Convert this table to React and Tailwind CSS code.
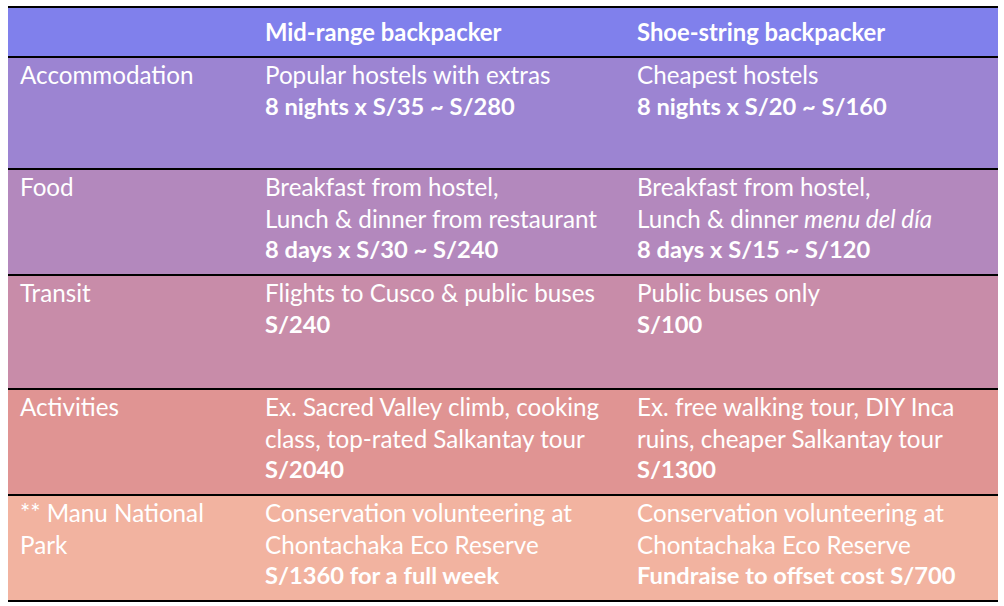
export default function App() {
  const rows = [
    {
      bg: "bg-[#9c84d2]",
      h: "h-[110px]",
      label: ["Accommodation"],
      a: [["Popular hostels with extras"], ["8 nights x S/35 ~ S/280", true]],
      b: [["Cheapest hostels"], ["8 nights x S/20 ~ S/160", true]],
    },
    {
      bg: "bg-[#b388bd]",
      h: "h-[104px]",
      label: ["Food"],
      a: [["Breakfast from hostel,"], ["Lunch & dinner from restaurant"], ["8 days x S/30 ~ S/240", true]],
      b: [["Breakfast from hostel,"], ["ITALIC"], ["8 days x S/15 ~ S/120", true]],
    },
    {
      bg: "bg-[#c88ca9]",
      h: "h-[112px]",
      label: ["Transit"],
      a: [["Flights to Cusco & public buses"], ["S/240", true]],
      b: [["Public buses only"], ["S/100", true]],
    },
    {
      bg: "bg-[#e09493]",
      h: "h-[104px]",
      label: ["Activities"],
      a: [["Ex. Sacred Valley climb, cooking"], ["class, top-rated Salkantay tour"], ["S/2040", true]],
      b: [["Ex. free walking tour, DIY Inca"], ["ruins, cheaper Salkantay tour"], ["S/1300", true]],
    },
    {
      bg: "bg-[#f2b3a0]",
      h: "h-[104px]",
      label: ["** Manu National", "Park"],
      a: [["Conservation volunteering at"], ["Chontachaka Eco Reserve"], ["S/1360 for a full week", true]],
      b: [["Conservation volunteering at"], ["Chontachaka Eco Reserve"], ["Fundraise to offset cost S/700", true]],
    },
  ];

  const renderLines = (lines) =>
    lines.map(([t, bold], i) =>
      t === "ITALIC" ? (
        <div key={i} className="whitespace-nowrap">
          Lunch &amp; dinner <span className="italic">menu del día</span>
        </div>
      ) : (
        <div
          key={i}
          className={bold ? "font-bold text-[23.7px] whitespace-nowrap" : "whitespace-nowrap"}
        >
          {t}
        </div>
      )
    );

  return (
    <div className="w-[1004px] h-[606px] bg-white pt-[6px] pl-[8px]">
      <div
        className="w-[990px] text-white text-[24.2px] leading-[31.7px]"
        style={{ fontFamily: "Lato, 'Noto Sans', sans-serif" }}
      >
        <div className="border-t-2 border-black" />
        <div className="grid grid-cols-[245px_372px_373px] h-[48px] bg-[#8080ec] font-bold text-[23.8px] items-center">
          <div className="pl-[12px]" />
          <div className="pl-[12px] pt-[2px]">Mid-range backpacker</div>
          <div className="pl-[12px] pt-[2px]">Shoe-string backpacker</div>
        </div>
        {rows.map((r, i) => (
          <div key={i}>
            <div className="border-t-2 border-black" />
            <div className={`grid grid-cols-[245px_372px_373px] ${r.h} ${r.bg} pt-[1px]`}>
              <div className="pl-[12px]">
                {r.label.map((l, j) => (
                  <div key={j}>{l}</div>
                ))}
              </div>
              <div className="pl-[12px]">{renderLines(r.a)}</div>
              <div className="pl-[12px]">{renderLines(r.b)}</div>
            </div>
          </div>
        ))}
        <div className="border-t-2 border-black" />
      </div>
    </div>
  );
}
